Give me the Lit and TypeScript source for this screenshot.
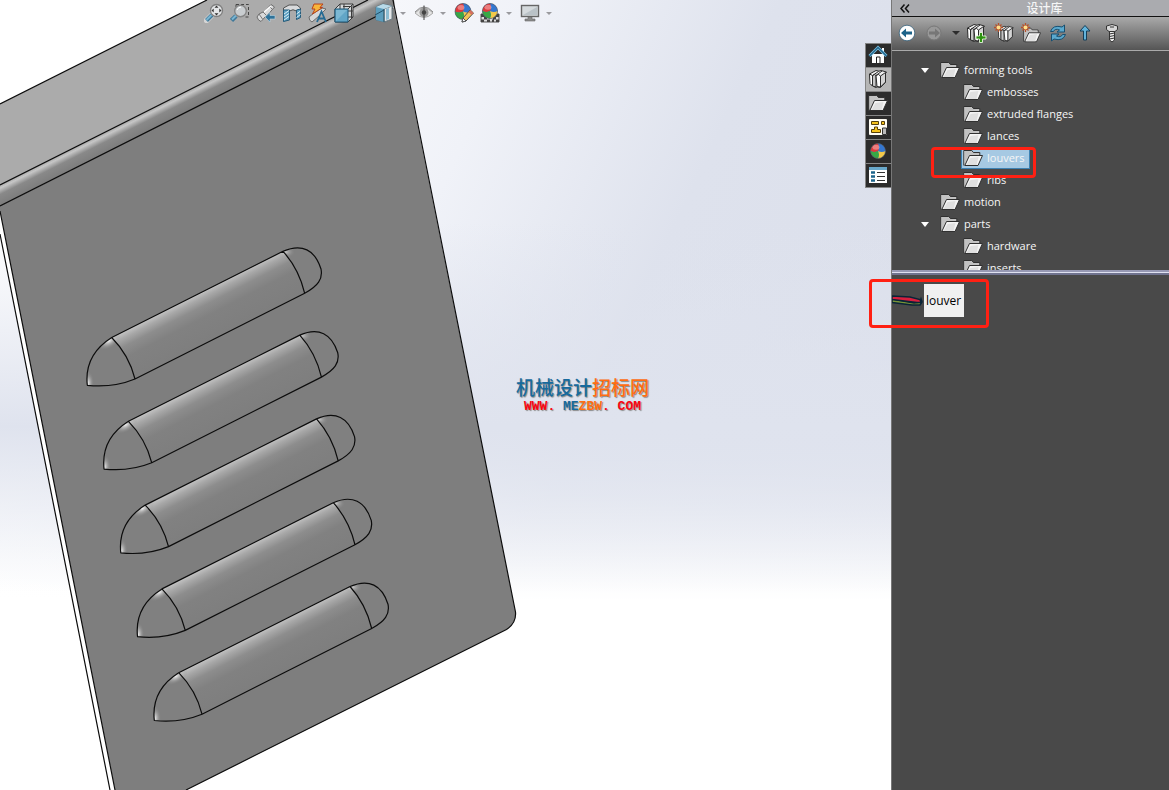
import { LitElement, html, css, svg, nothing } from "lit";
import { customElement, property, state } from "lit/decorators.js";

const folder = svg`
  <path d="M.8 17.500V2.500h8l1.500 2h6.500v4" fill="#c9c9c9" stroke="#303030"/>
  <path d="M1.500 3h7l1.500 2H16v3H6.500L1.500 16z" fill="#c2c2c2"/>
  <path d="M1.800 17.500 6.500 7.500h13l-4.500 10z" fill="#f4f4f4" stroke="#303030"/>
  <path d="M3.500 17 7.500 10l8-1-2 8z" fill="#e0e0e0"/>`;

const books = svg`
  <g stroke="#2c2c2c" stroke-width="1" stroke-linejoin="round">
    <path d="M1.500 5 8 1.500l3 .7 2-.7 5.500 1.500-1 1.500v9l-5 5-3-.5-2 .5-4.500-3z" fill="#eee"/>
    <path d="m1.500 5 3 1.500V17L2 14.500z" fill="#fff"/>
    <path d="m4.500 6.500 2-1 1.500 1V18l-3.500-1z" fill="#c6c6c6"/>
    <path d="m8 6.500 2.500-1 2 1.500v11L9 17.500z" fill="#fff"/>
    <path d="m12.500 7 5-3.500V13l-5 5z" fill="#d4d4d4"/>
    <path d="m4.500 6.500 6-4M8 6.500l6-4.500" fill="none"/>
  </g>`;

const spark = svg`
  <g stroke="#b5502a" stroke-width="1.300"><path d="M4.500 0v9M0 4.500h9M1.500 1.500l6 6M7.500 1.500l-6 6"/></g>
  <circle cx="4.500" cy="4.500" r="2" fill="#ffe08a"/>`;

const ball = (cx: number, cy: number, r: number) => svg`
  <circle cx=${cx} cy=${cy} r=${r} fill="#2f78d0"/>
  <path d="M${cx} ${cy - r}A${r} ${r} 0 0 1 ${cx + r} ${cy}Q${cx + r / 2} ${cy + 2} ${cx} ${cy}Q${cx - 2} ${cy - r / 2} ${cx} ${cy - r}z" fill="#3476cf"/>
  <path d="M${cx} ${cy - r}A${r} ${r} 0 0 0 ${cx - r} ${cy}Q${cx - r / 2} ${cy + 2} ${cx} ${cy}Q${cx + 2} ${cy - r / 2} ${cx} ${cy - r}z" fill="#e0393b"/>
  <path d="M${cx - r} ${cy}A${r} ${r} 0 0 0 ${cx} ${cy + r}Q${cx + 2} ${cy + r / 2} ${cx} ${cy}Q${cx - r / 2} ${cy + 2} ${cx - r} ${cy}z" fill="#38a845"/>
  <path d="M${cx + r} ${cy}A${r} ${r} 0 0 1 ${cx} ${cy + r}Q${cx + 2} ${cy + r / 2} ${cx} ${cy}Q${cx + r / 2} ${cy + 2} ${cx + r} ${cy}z" fill="#f3c94a"/>
  <ellipse cx=${cx - 2} cy=${cy - r / 2} rx="3.500" ry="2.500" fill="#fff" opacity=".35"/>
  <circle cx=${cx} cy=${cy} r=${r} fill="none" stroke="#555" stroke-width=".6"/>`;

const icons: Record<string, unknown> = {
  folder,
  books,
  zoomFit: svg`
    <path d="M8 12 2.500 17.500" stroke="#fff" stroke-width="5.500" stroke-linecap="round" opacity=".5"/>
    <path d="M8 12 2.500 17.500" stroke="#3f7899" stroke-width="4"/><path d="M7.500 12 2.500 17" stroke="#79b5d2" stroke-width="2"/>
    <circle cx="12.500" cy="7.500" r="6" fill="#e4e6e8" stroke="#808080" stroke-width="1.400"/>
    <path d="m12.500 2.500 2 2.200h-4zM12.500 12.500l2-2.200h-4zM7.500 7.500l2.200-2v4zM17.500 7.500l-2.200-2v4z" fill="#333"/>`,
  zoomArea: svg`
    <path d="M6 1.500h12.500V14M6 1.500V4M18.500 14H15" fill="none" stroke="#444" stroke-dasharray="3 2"/>
    <path d="M6 13 1.500 17.500" stroke="#3f7899" stroke-width="4.500"/><path d="M6 12.500 2 16.500" stroke="#79b5d2" stroke-width="2"/>
    <circle cx="10.500" cy="8" r="5.800" fill="#c9cdd0" stroke="#858585" stroke-width="1.400"/><path d="M7 7q1-3 4-3" stroke="#fff" fill="none"/>`,
  prevView: svg`
    <path d="m1 14 2-3 6-3 6-6.500 3.500 2.500-6 7-3 2.500L5 18.500q-3-1-4-4.500z" fill="#d9dadb" stroke="#6c6c6c"/>
    <path d="m7 9 4 4M13 3l3.500 3.500M3 11l3.500 5" stroke="#777" fill="none"/><path d="m8 9 7-6" stroke="#fff" stroke-width="1.500"/>
    <path d="m9 14 5-4.500v3h5v3.500h-5v3z" fill="#2f7299" stroke="#b9d5e3" stroke-width=".6"/>`,
  section: svg`
    <path d="M1.500 5 7 2h8l3.500 3v9l-4 2V8q-3.500-2.500-7 0v8l-6 2z" fill="#d8dadc" stroke="#525252"/>
    <path d="M1.500 7h6v10l-6 1.500zM14.500 7l4-1v8.500l-4 2z" fill="#5ba0c2" stroke="#265c7b"/>
    <path d="m2 11 5-3.500M2 14l5-3.500M2 17l5-3.500M14.500 11l4-3M14.500 14.500l4-3" stroke="#dbeef6"/>`,
  dynamic: svg`
    <path d="m1 14 5-4 8-5 4 1-7 7-7 6q-3-1-3-5z" fill="#d6d7d8" stroke="#6c6c6c"/>
    <path d="M6 1h9l-3 3.500h2.500L4.500 11l2.500-5H4z" fill="#f8b53b" stroke="#b9421c"/>
    <path d="m9 19 4.500-10.500L18 19M10.500 15.500h6" fill="none" stroke="#256b94" stroke-width="1.800"/>`,
  orient: svg`
    <path d="m1 6 5-5h13v13l-5 5H1z" fill="#d5d8da" stroke="#3b3b3b"/>
    <path d="M6 1v13h13M1 19l5-5M14 6l5-5M10 1v5M19 8h-5M9 3.500h8.500V16" fill="none" stroke="#3b3b3b"/>
    <path d="M1 6h13v13H1z" fill="#62a6c7" stroke="#1e5879"/><path d="M2 7h11L2 18z" fill="#8bc1da" opacity=".65"/>`,
  display: svg`
    <path d="m2 4 7-3 9 2v13l-7 3-9-2z" fill="#72b2d0" stroke="#5c7480"/>
    <path d="m2 4 8 2v13l-8-2z" fill="#5b9dbd"/><path d="m10 6 8-3v13l-8 3z" fill="#e3e7ea" stroke="#748085"/>
    <path d="M2 4 9 1l9 2-8 3z" fill="#b9dae8"/><path d="m12 6 3-1v11l-3 1z" fill="#8dbcd2"/><path d="M10 6v13M1 12l9-5" stroke="#22526b"/>`,
  eye: svg`
    <path d="M1 10Q10 0 19 10 10 19 1 10z" fill="#e4e4e4" stroke="#aaa"/>
    <path d="M1 9Q10-1 19 9" fill="none" stroke="#888"/>
    <circle cx="10" cy="9.500" r="4.500" fill="#999"/><path d="M10 2.500V17" stroke="#444"/><circle cx="10" cy="9.500" r="2.200" fill="#444"/>`,
  appearance: svg`${ball(9, 8.5, 8)}
    <path d="m8 19 1-4 7-8 3.500 3-7.500 8z" fill="#f1c257" stroke="#4d4d4d"/><path d="m8 19 1-4 3 3z" fill="#fff" stroke="#555"/><path d="m14.500 9 3 3 2-2-3-3z" fill="#d66f5f"/>`,
  scene: svg`
    <path d="M1 11h18v8H1z" fill="#ddd" stroke="#555"/><path d="M1 11h4v3H1zM15 11h4v3h-4zM4 14h3v2.500H4zM13 14h3v2.500h-3zM7 16.500h3V19H7zM12 16.500h2V19h-2zM1 16.500h3V19H1zM16 16.500h3V19h-3z" fill="#444"/>
    ${ball(10, 8, 7.6)}`,
  monitor: svg`
    <path d="M8 13h4v3h3v2H5v-2h3z" fill="#8c8c8c" stroke="#666" stroke-width=".6"/>
    <rect x="1.500" y="2.500" width="17" height="11" fill="#d5dadd" stroke="#666" stroke-width="1.400"/><path d="M3 12 17 4v8z" fill="#bac2c7"/>`,
  back: svg`<circle cx="10" cy="10" r="7.800" fill="#fff" stroke="#245472" stroke-width=".7"/>
    <path d="m4 10 5-4.500v3h6v3H9v3z" fill="#1c6389"/>`,
  forward: svg`<circle cx="10" cy="10" r="7" fill="#999" stroke="#777"/>
    <path d="m16 10-5-4.500v3H5v3h6v3z" fill="#777"/>`,
  addLib: svg`<g transform="translate(-1 0)">${books}</g>
    <path d="M12.500 9.500h3v3.500H19v3h-3.500v3.500h-3V16H9v-3h3.500z" fill="#2d9310" stroke="#e5f4dd" stroke-width=".9"/>`,
  newLib: svg`<g transform="translate(3 2) scale(.88)">${books}</g>${spark}`,
  newFolder: svg`<g transform="translate(2 3) scale(.9)">${folder}</g>${spark}`,
  refresh: svg`
    <path d="M2.500 8.500Q5 1.500 14 4l2.500-2v7H9l2.500-2Q7 5 5.500 8.500z" fill="#5ba9ce" stroke="#174f70"/>
    <path d="M17.500 11.500Q15 18.500 6 16l-2.500 2v-7H11l-2.500 2q4.500 2 6-1.500z" fill="#5ba9ce" stroke="#174f70"/>`,
  up: svg`<path d="m10 2.500 5 5.500h-3.500v9h-3V8H5z" fill="#63b4dc" stroke="#123f5a"/>`,
  screw: svg`
    <path d="M4.500 3q5.500-3 11 0v3.500L13 8.500H7L4.500 6.500z" fill="#d7d7d7" stroke="#333"/>
    <path d="M7.500 8.500h5V17l-2.500 2-2.500-2z" fill="#eee" stroke="#333"/><path d="m7.500 11 5-1M7.500 13.500l5-1M7.500 16l5-1M8 4h4" stroke="#333"/>`,
  home: svg`
    <path d="M4 9h12v9H4z" fill="#fff"/><path d="M8.500 18v-6h3.500v6" fill="#fff" stroke="#222"/>
    <path d="M15 3v4" stroke="#fff" stroke-width="2"/><path d="m1.500 11 8.500-8.500 8.500 8.500" fill="none" stroke="#7fc2e3" stroke-width="3"/><path d="m1.500 11 8.500-8.500 8.500 8.500" fill="none" stroke="#256b91" stroke-width="1.500"/>`,
  palette: svg`
    <rect x="1" y="2" width="18" height="16" rx="1" fill="#fffdf4"/>
    <g fill="#f5c21c" stroke="#553e08"><path d="M3.500 4.500h7v3h-7zM13.500 4.500h3v3h-3zM6.500 10h3v2.500h3v3h-9v-3h3z"/></g>
    <path d="M14.500 11h4v6.500h-4z" fill="#bbb" stroke="#333"/>`,
  props: svg`
    <path d="M1 2h18v16H1z" fill="#fff"/><path d="M1 2h18v3H1z" fill="#69a9cb"/>
    <path d="M3 7.500h4M3 11.500h4M3 15.500h4" stroke="#1e658c" stroke-width="2.400"/><path d="M9 7.500h8M9 11.500h8M9 15.500h8" stroke="#333" stroke-width="1.200"/>`,
  sphere: ball(10, 10, 7.5),
};

@customElement("cad-icon")
class CadIcon extends LitElement {
  static styles = css`
    :host { display: block; width: 20px; height: 20px; }
    svg { display: block; width: 100%; height: 100%; }
  `;
  @property() name = "";
  render() {
    return html`<svg viewBox="0 0 20 20" fill="none" aria-hidden="true">${icons[this.name]}</svg>`;
  }
}

@customElement("cad-model")
class CadModel extends LitElement {
  static styles = css`
    :host { display: block; height: 100%; }
    svg { display: block; width: 100%; height: 100%; }
    .edge { fill: none; stroke: #0c0c0c; stroke-width: 1.2; stroke-linejoin: round; }
  `;
  render() {
    return html`<svg role="img" aria-label="Sheet metal plate with five louvers">
      <defs>
        <linearGradient id="shine" gradientUnits="userSpaceOnUse" x1="197" y1="294" x2="219" y2="337">
          <stop offset="0" stop-color="#c4c4c4"/><stop offset=".12" stop-color="#a8a8a8"/>
          <stop offset=".28" stop-color="#8d8d8d"/><stop offset=".5" stop-color="#818181"/><stop offset="1" stop-color="#7e7e7e"/>
        </linearGradient>
        <linearGradient id="bend" gradientUnits="userSpaceOnUse" x1="0" y1="185" x2="8.500" y2="202">
          <stop offset="0" stop-color="#aaa"/><stop offset=".15" stop-color="#c6c6c6"/>
          <stop offset=".45" stop-color="#898989"/><stop offset="1" stop-color="#7c7c7c"/>
        </linearGradient>
        <radialGradient id="glint"><stop offset="0" stop-color="#eee"/><stop offset="1" stop-color="#888" stop-opacity="0"/></radialGradient>
        <clipPath id="outline"><path d="M87.300 385.300Q84 355 111.700 337.500L283 251.300C302 243 315 250 321 269 323 279 318 286 304.700 293.300L135 379Q113 388 87.300 385.300z"/></clipPath>
        <g id="louver">
          <g clip-path="url(#outline)">
            <path d="M80 240h250v150H80z" fill="#808080"/>
            <path d="M111.700 337.500 283 251.300Q299 269 304.700 293.300L135 379Q129 355 111.700 337.500z" fill="url(#shine)"/>
            <ellipse cx="109" cy="341" rx="13" ry="7" fill="url(#glint)" transform="rotate(-30 109 341)"/>
            <ellipse cx="88" cy="383" rx="6" ry="12" fill="url(#glint)"/>
            <ellipse cx="286" cy="252" rx="9" ry="6" fill="url(#glint)" opacity=".6"/>
          </g>
          <path class="edge" d="M87.300 385.300Q84 355 111.700 337.500L283 251.300C302 243 315 250 321 269 323 279 318 286 304.700 293.300L135 379Q113 388 87.300 385.300zM111.700 337.500Q129 355 135 379M283 251.300Q299 269 304.700 293.300"/>
        </g>
      </defs>
      <path d="M0 104 207 0h161L0 185z" fill="#ababab"/>
      <path d="M0 185 368 0h26q1 4-1 9L0 206z" fill="url(#bend)"/>
      <path d="M0 206 394 8 515.500 612q1 11-9 17.500L186 790H115L0 212z" fill="#7e7e7e"/>
      <path d="M0 211 115 790h-5L0 234z" fill="#fff"/>
      <path class="edge" d="M0 104 207 0M0 185 368 0M0 206 393 8M393 0 515.500 612q1 11-9 17.500L186 790M0 211 115 790M0 234 110 790"/>
      ${[0, 1, 2, 3, 4].map((i) => svg`<use href="#louver" x=${i * 16.75} y=${i * 83.8}></use>`)}
    </svg>`;
  }
}

interface TreeNode {
  label: string;
  open?: boolean;
  children?: TreeNode[];
}

const library: TreeNode[] = [
  {
    label: "forming tools",
    open: true,
    children: [
      { label: "embosses" },
      { label: "extruded flanges" },
      { label: "lances" },
      { label: "louvers" },
      { label: "ribs" },
    ],
  },
  { label: "motion" },
  { label: "parts", open: true, children: [{ label: "hardware" }, { label: "inserts" }] },
];

@customElement("app-root")
class AppRoot extends LitElement {
  static styles = css`
    :host {
      display: grid;
      grid-template-columns: minmax(0, 1fr) 278px;
      height: 100vh;
      overflow: hidden;
      font: 12px/16px "Open Sans", "Noto Sans", "Noto Sans CJK SC", sans-serif;
      color: #f6f6f6;
    }
    button { display: block; margin: 0; padding: 0; border: 0; background: none; color: inherit; font: inherit; }
    ul { list-style: none; margin: 0; padding: 0; }
    .viewport {
      position: relative;
      overflow: hidden;
      background:
        linear-gradient(180deg, #fff0 54%, #fff 76%),
        linear-gradient(115deg, #fff 15%, #f0f2f8 42%, #dee2ed 62%, #dadeea 100%);
    }
    .sky { position: absolute; inset: 0; background: linear-gradient(180deg, #dfe3ee00 28%, #dfe3ee 54%, #dfe3ee00 75%); }
    cad-model { position: relative; }
    .view-tools { position: absolute; top: 3px; left: 204px; display: flex; gap: 6px; }
    .split { display: flex; align-items: center; gap: 4px; }
    .display { margin-left: 14px; }
    .drop { width: 10px; height: 20px; display: grid; place-items: center; }
    .drop::before { content: ""; border: 3px solid transparent; border-top-color: #9a9a9e; border-bottom: 0; }
    .watermark { position: absolute; left: 516px; top: 374px; text-align: center; text-shadow: 1px 1px 1px #888; }
    .brand { font: 500 19px/25px "Noto Sans CJK SC", sans-serif; }
    .site { font: bold 13px/16px "Liberation Mono", monospace; white-space: pre; }
    .blue { color: #176a9d; }
    .orange { color: #ff6d12; }
    .red { color: #fa0510; }
    .tabs { position: absolute; right: 0; top: 43px; width: 26px; background: #2c2c2c; border: solid #858585; border-width: 1px 0 0 1px; box-sizing: border-box; }
    .tab { width: 100%; height: 24px; display: grid; place-items: center; padding: 0 2px 1px 0; border-bottom: 1px solid #858585; }
    .tab.active { background: #b5b5b5; }
    .panel {
      position: relative;
      display: grid;
      grid-template-rows: 16px 35px 219px 5px minmax(0, 1fr);
      background: #494949;
      border-left: 1px solid #777;
    }
    .head { display: grid; grid-template-columns: 26px 1fr; align-items: center; background: #aaabaf; }
    .title { margin: 0; padding-left: 2px; text-align: center; font: 500 12px/14px "Noto Sans CJK SC", sans-serif; }
    .collapse { display: grid; place-items: center; height: 14px; }
    .lib-tools { display: flex; align-items: center; gap: 7px; padding: 0 5px 2px; background: linear-gradient(#a9a9a9, #555); border-top: 1px solid #111; border-bottom: 1px solid #aaa; }
    .lib-tools .drop { width: 9px; }
    .lib-tools .drop::before { border-width: 4px 4px 0; border-top-color: #2c2c2c; }
    .tree { overflow: hidden; padding: 8px 0 0 26px; font-size: 11px; }
    .row { position: relative; display: flex; align-items: center; gap: 6px; height: 22px; }
    .branch { padding-left: 23px; }
    .twist { width: 14px; height: 22px; display: grid; place-items: center; }
    .twist.open::before { content: ""; border: 4px solid transparent; border-top: 5px solid #fff; border-bottom: 0; }
    .node { display: flex; align-items: center; gap: 4px; height: 22px; padding: 0 4px 0 1px; border: 1px solid transparent; box-sizing: border-box; }
    .node.selected { background: #a6c9e3; border-color: #3d82b4; }
    .callout { position: absolute; border: 3px solid #ff2013; border-radius: 4px; box-sizing: border-box; pointer-events: none; z-index: 1; }
    .callout.folder { left: -10px; top: 0; width: 105px; height: 31px; }
    .callout.part { left: -23px; top: 4px; width: 120px; height: 49px; }
    .divider { background: linear-gradient(#9799b4 0 2px, #dfe1f0 2px 3px, #70738f 3px 5px); }
    .parts { position: relative; padding-top: 9px; }
    .part-item { display: flex; align-items: center; }
    .thumb { width: 32px; height: 16px; display: block; }
    .part-name { background: #f0f0f0; color: #000; padding: 9px 3px 8px 2px; }
  `;

  @state() private selected = "louvers";
  @state() private tab = "Design Library";

  private tool(name: string, label: string, drop = false, cls = "") {
    return html`<div class="split ${cls}">
      <button aria-label=${label}><cad-icon name=${name}></cad-icon></button>
      ${drop ? html`<button class="drop" aria-label="${label} options"></button>` : nothing}
    </div>`;
  }

  private renderNode(n: TreeNode): unknown {
    const active = n.label === this.selected;
    return html`<li>
      <div class="row">
        <button class="twist ${n.open ? "open" : ""}" aria-label="Expand ${n.label}" ?disabled=${!n.children}></button>
        <button class="node ${active ? "selected" : ""}" @click=${() => (this.selected = n.label)}>
          <cad-icon name="folder"></cad-icon><span>${n.label}</span>
        </button>
        ${n.label === "louvers" ? html`<span class="callout folder"></span>` : nothing}
      </div>
      ${n.open && n.children ? html`<ul class="branch">${n.children.map((c) => this.renderNode(c))}</ul>` : nothing}
    </li>`;
  }

  render() {
    const tabs = [
      ["home", "Resources"], ["books", "Design Library"], ["folder", "File Explorer"],
      ["palette", "View Palette"], ["sphere", "Appearances"], ["props", "Custom Properties"],
    ];
    return html`
      <main class="viewport">
        <div class="sky"></div>
        <cad-model></cad-model>
        <div class="view-tools">
          ${this.tool("zoomFit", "Zoom to fit")}
          ${this.tool("zoomArea", "Zoom to area")}
          ${this.tool("prevView", "Previous view")}
          ${this.tool("section", "Section view")}
          ${this.tool("dynamic", "Dynamic annotation")}
          ${this.tool("orient", "View orientation")}
          ${this.tool("display", "Display style", true, "display")}
          ${this.tool("eye", "Hide or show", true)}
          ${this.tool("appearance", "Edit appearance")}
          ${this.tool("scene", "Apply scene", true)}
          ${this.tool("monitor", "View settings", true)}
        </div>
        <div class="watermark">
          <div class="brand"><span class="blue">机械设计</span><span class="orange">招标网</span></div>
          <div class="site"><span class="red">WWW. </span><span class="blue">ME</span><span class="orange">ZBW</span><span class="red">. COM</span></div>
        </div>
        <nav class="tabs">
          ${tabs.map(([icon, label]) => html`<button class="tab ${label === this.tab ? "active" : ""}" aria-label=${label}
            @click=${() => (this.tab = label)}><cad-icon name=${icon}></cad-icon></button>`)}
        </nav>
      </main>
      <aside class="panel">
        <header class="head">
          <button class="collapse" aria-label="Collapse"><svg width="10" height="9" fill="none" stroke="#111" stroke-width="1.500"><path d="M4.500.5 1 4.500l3.500 4M9 .5 5.500 4.500 9 8.500"/></svg></button>
          <h1 class="title">设计库</h1>
        </header>
        <div class="lib-tools">
          ${this.tool("back", "Back")}
          ${this.tool("forward", "Forward")}
          <button class="drop" aria-label="History"></button>
          ${this.tool("addLib", "Add to library")}
          ${this.tool("newLib", "Add file location")}
          ${this.tool("newFolder", "Create new folder")}
          ${this.tool("refresh", "Refresh")}
          ${this.tool("up", "Up one level")}
          ${this.tool("screw", "Configure Toolbox")}
        </div>
        <ul class="tree">${library.map((n) => this.renderNode(n))}</ul>
        <div class="divider"></div>
        <div class="parts">
          <div class="part-item">
            <svg class="thumb" viewBox="0 0 32 16" aria-hidden="true">
              <path d="M0 6 22 10l6-1 1-3 1 3-2 3-8 0L0 9.500z" fill="#789438" stroke="#0a2437" stroke-width="1.600"/>
              <path d="M0 3 18 4l10 2.500 1 3-4 0L0 6.500z" fill="#d71f3e" stroke="#0a2437" stroke-width="1.400"/>
            </svg>
            <span class="part-name">louver</span>
          </div>
          <span class="callout part"></span>
        </div>
      </aside>`;
  }
}
